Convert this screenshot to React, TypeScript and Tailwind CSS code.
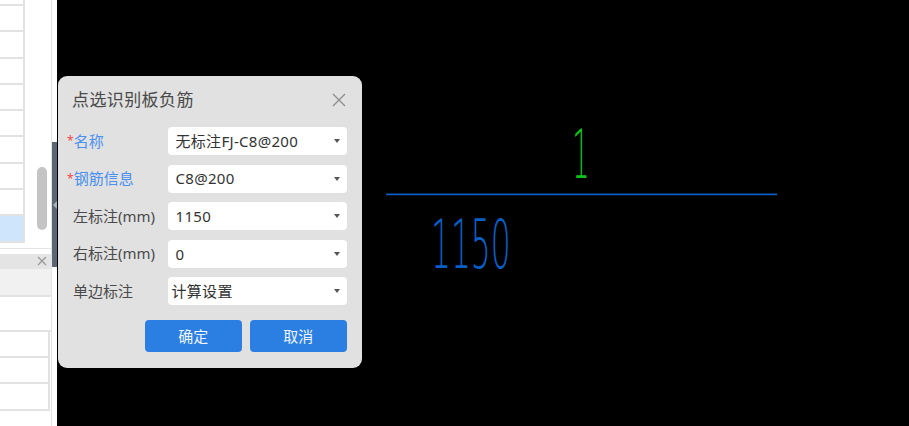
import React from 'react';

const fields = [
  { label: '名称', required: true, value: '无标注FJ-C8@200', pad: 'pl-2' },
  { label: '钢筋信息', required: true, value: 'C8@200', pad: 'pl-2' },
  { label: '左标注(mm)', required: false, value: '1150', pad: 'pl-2' },
  { label: '右标注(mm)', required: false, value: '0', pad: 'pl-2' },
  { label: '单边标注', required: false, value: '计算设置', pad: 'pl-1' },
];

const Caret = () => (
  <span className="ml-auto mr-[7px] h-0 w-0 border-x-[3px] border-t-[4px] border-x-transparent border-t-[#555]" />
);

const Sidebar = () => (
  <div className="flex h-full w-[52px] shrink-0 flex-col border-r border-[#e4e4e4] bg-white">
    <div className="flex h-[241.5px] shrink-0 flex-col">
      <div className="h-[6px] w-[24.5px] shrink-0 border-b-2 border-r-2 border-[#e2e2e2]" />
      {Array.from({ length: 9 }).map((_, i) => (
        <div
          key={i}
          className={`h-[26.3px] w-[24.5px] shrink-0 border-b-2 border-r-2 border-[#e2e2e2] ${i === 8 ? 'bg-[#cfe5fb]' : 'bg-white'}`}
        />
      ))}
    </div>
    <div className="mt-[6px] h-[6px] shrink-0 border-t border-[#e4e4e4]" />
    <div className="flex h-[15px] shrink-0 items-center justify-end bg-[#e4e4e4] pr-[4px]">
      <svg width="10" height="10" viewBox="0 0 10 10" className="text-[#9a9a9a]">
        <path d="M1 1l8 8M9 1L1 9" stroke="currentColor" strokeWidth="1.3" fill="none" />
      </svg>
    </div>
    <div className="h-[28px] shrink-0 border-b-2 border-[#e2e2e2] bg-[#f1f1f1]" />
    <div className="h-[35px] shrink-0 border-b-2 border-[#e2e2e2] bg-white" />
    {Array.from({ length: 3 }).map((_, i) => (
      <div key={i} className="h-[26.4px] w-[50px] shrink-0 border-b-2 border-r-2 border-[#e2e2e2] bg-white" />
    ))}
  </div>
);

const Dialog = () => (
  <div className="absolute left-[58px] top-[76px] flex h-[292px] w-[304px] flex-col rounded-[9px] bg-[#e1e1e1] px-[14px] font-['Noto_Sans','Noto_Sans_CJK_SC',sans-serif] text-[15px] text-[#4a4a4a]">
    <div className="flex h-[51px] shrink-0 items-center justify-between pb-[3px]">
      <span className="text-[17px] tracking-[0.4px]">点选识别板负筋</span>
      <svg width="16" height="16" viewBox="0 0 16 16" className="mr-[1px] text-[#8e8e8e]">
        <path d="M2 2l12 12M14 2L2 14" stroke="currentColor" strokeWidth="1.4" fill="none" />
      </svg>
    </div>
    <div className="flex flex-col gap-[9.6px]">
      {fields.map((f) => (
        <div key={f.label} className="flex h-[28px] items-center">
          <div className="w-[95.5px] shrink-0">
            <label className={`flex items-center leading-none ${f.required ? '-ml-[5px] text-[#4a90ee]' : 'pl-[1px]'}`}>
              {f.required && <span className="text-[12px] text-[#f04848]">*</span>}
              <span>{f.label}</span>
            </label>
          </div>
          <div className={`flex h-[28px] w-[179.5px] shrink-0 items-center rounded-[4px] bg-white ${f.pad} tracking-[0.3px] text-[#333]`}>
            <span>{f.value}</span>
            <Caret />
          </div>
        </div>
      ))}
    </div>
    <div className="mr-[1px] mt-[14.5px] flex justify-end gap-[7.5px]">
      <button className="h-[32.5px] w-[97.5px] rounded-[4px] bg-[#2b7fe3] text-[#eef5fd]">确定</button>
      <button className="h-[32.5px] w-[97.5px] rounded-[4px] bg-[#2b7fe3] text-[#eef5fd]">取消</button>
    </div>
  </div>
);

export default function App() {
  return (
    <div className="relative flex h-[426px] w-[909px] overflow-hidden bg-black">
      <Sidebar />
      <div className="flex w-[5px] shrink-0 flex-col bg-white">
        <div className="mt-[142px] flex h-[125px] items-center justify-center bg-[#5a6672]">
          <span className="h-0 w-0 border-y-[4px] border-r-[4px] border-y-transparent border-r-[#aab2ba]" />
        </div>
      </div>
      {/* canvas */}
      <svg width="852" height="426" viewBox="57 0 852 426" className="shrink-0">
        <line x1="386" y1="194.4" x2="777" y2="194.4" stroke="#0a5fc4" strokeWidth="1.8" />
        <text
          x="581"
          y="178"
          textAnchor="middle"
          fill="#10c020"
          fontFamily="DejaVu Sans"
          fontWeight="200"
          fontSize="68"
          transform="translate(581 178) scale(0.4 1) translate(-581 -178)"
        >
          1
        </text>
        <text
          x="431"
          y="268"
          fill="#0a5fc4"
          fontFamily="DejaVu Sans"
          fontWeight="200"
          fontSize="68"
          transform="translate(431 268) scale(0.46 1) translate(-431 -268)"
        >
          1150
        </text>
      </svg>
      <div className="absolute left-[37px] top-[167px] h-[63px] w-[10px] rounded-full bg-[#c4c4c4]" />
      <Dialog />
    </div>
  );
}
